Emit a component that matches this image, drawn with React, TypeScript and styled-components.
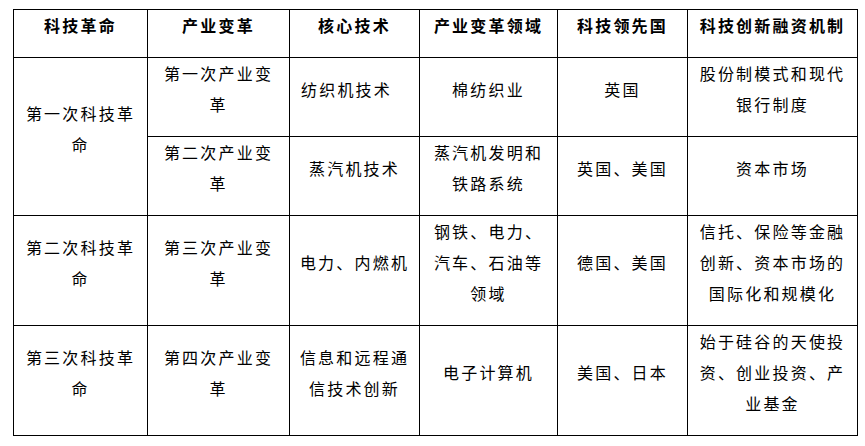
import React from "react";
import styled, { createGlobalStyle } from "styled-components";

const Global = createGlobalStyle`
  html, body {
    margin: 0;
    padding: 0;
    background: #ffffff;
  }
  body {
    font-family: "Noto Sans CJK SC", "Noto Sans", sans-serif;
    color: #000;
  }
`;

const Page = styled.div`
  padding: 9px 0 0 13px;
`;

const Table = styled.table`
  border-collapse: collapse;
  table-layout: fixed;
  width: 844px;
  font-size: 16px;
  line-height: 31px;
  letter-spacing: 2.2px;
`;

const HeadCell = styled.th`
  border: 1px solid #000;
  padding: 0 4px 16px;
  font-weight: 700;
  text-align: center;
  vertical-align: top;
`;

const Cell = styled.td<{ $align?: "left" | "center" }>`
  border: 1px solid #000;
  padding: 0 8px 16px ${(p) => (p.$align === "left" ? "11px" : "8px")};
  font-weight: 400;
  text-align: ${(p) => p.$align ?? "center"};
  vertical-align: middle;
`;

const widths = [134, 142, 130, 138, 130, 170];
const headers = ["科技革命", "产业变革", "核心技术", "产业变革领域", "科技领先国", "科技创新融资机制"];

export default function App() {
  return (
    <>
      <Global />
      <Page>
        <Table>
          <colgroup>
            {widths.map((w, i) => (
              <col key={i} style={{ width: w }} />
            ))}
          </colgroup>
          <thead>
            <tr>
              {headers.map((h) => (
                <HeadCell key={h}>{h}</HeadCell>
              ))}
            </tr>
          </thead>
          <tbody>
            <tr>
              <Cell rowSpan={2}>第一次科技革命</Cell>
              <Cell>第一次产业变革</Cell>
              <Cell $align="left">纺织机技术</Cell>
              <Cell>棉纺织业</Cell>
              <Cell>英国</Cell>
              <Cell>股份制模式和现代银行制度</Cell>
            </tr>
            <tr>
              <Cell>第二次产业变革</Cell>
              <Cell>蒸汽机技术</Cell>
              <Cell>蒸汽机发明和铁路系统</Cell>
              <Cell>英国、美国</Cell>
              <Cell>资本市场</Cell>
            </tr>
            <tr>
              <Cell>第二次科技革命</Cell>
              <Cell>第三次产业变革</Cell>
              <Cell>电力、内燃机</Cell>
              <Cell>钢铁、电力、汽车、石油等领域</Cell>
              <Cell>德国、美国</Cell>
              <Cell>信托、保险等金融创新、资本市场的国际化和规模化</Cell>
            </tr>
            <tr>
              <Cell>第三次科技革命</Cell>
              <Cell>第四次产业变革</Cell>
              <Cell>信息和远程通信技术创新</Cell>
              <Cell>电子计算机</Cell>
              <Cell>美国、日本</Cell>
              <Cell>始于硅谷的天使投资、创业投资、产业基金</Cell>
            </tr>
          </tbody>
        </Table>
      </Page>
    </>
  );
}
